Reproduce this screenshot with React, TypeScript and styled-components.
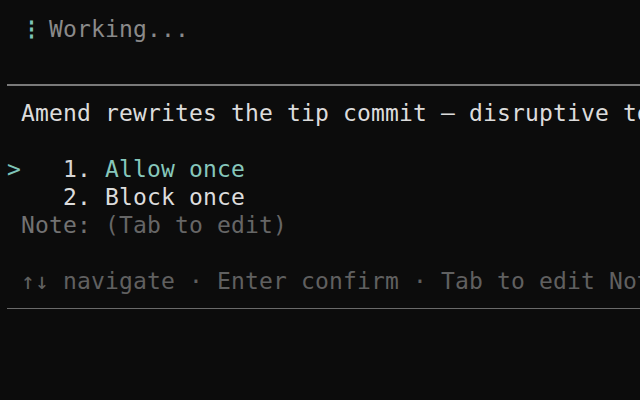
import React from "react";
import styled, { createGlobalStyle } from "styled-components";

const Global = createGlobalStyle`
  html, body { margin: 0; padding: 0; background: #0c0c0c; }
  body { width: 640px; height: 400px; overflow: hidden; }
`;

const Screen = styled.div`
  box-sizing: border-box;
  width: 640px;
  height: 400px;
  padding: 15px 0 0 7px;
  background: #0c0c0c;
  font-family: "DejaVu Sans Mono", "Liberation Mono", monospace;
  font-size: 23px;
  letter-spacing: 0.15px;
  overflow: hidden;
`;

const Line = styled.div<{ $color?: string }>`
  height: 28px;
  line-height: 28px;
  white-space: pre;
  overflow: hidden;
  color: ${(p) => p.$color ?? "#d6d6d6"};
`;

const Span = styled.span<{ $color: string }>`
  color: ${(p) => p.$color};
`;

const Spinner = styled.span<{ $color: string }>`
  display: inline-block;
  width: 28px;
  vertical-align: top;
  text-align: left;
  font-size: 21px;
  font-weight: bold;
  letter-spacing: 0;
  color: ${(p) => p.$color};
`;

const Rule = styled.div<{ $thick?: boolean; $before: number; $after: number }>`
  height: ${(p) => (p.$thick ? 2 : 1)}px;
  margin: ${(p) => p.$before}px 0 ${(p) => p.$after}px 0;
  background: ${(p) => (p.$thick ? "#7a7a7a" : "#6a6a6a")};
`;

export default function App() {
  return (
    <>
      <Global />
      <Screen>
        <Line>
          {" "}
          <Spinner $color="#7ec4b8">⋮</Spinner>
          <Span $color="#8a8a8a">{"Working..."}</Span>
        </Line>
        <Rule $thick $before={41} $after={13} />
        <Line $color="#dcdcdc">{" Amend rewrites the tip commit — disruptive to shared history"}</Line>
        <Line> </Line>
        <Line>
          <Span $color="#7ec4b8">{">"}</Span>
          <Span $color="#d6d6d6">{"   1. "}</Span>
          <Span $color="#86c7bb">Allow once</Span>
        </Line>
        <Line $color="#dcdcdc">{"    2. Block once"}</Line>
        <Line>
          <Span $color="#727272">{" Note: "}</Span>
          <Span $color="#666666">(Tab to edit)</Span>
        </Line>
        <Line> </Line>
        <Line $color="#606060">{" ↑↓ navigate · Enter confirm · Tab to edit Note · Esc cancel"}</Line>
        <Rule $before={13} $after={0} />
      </Screen>
    </>
  );
}
